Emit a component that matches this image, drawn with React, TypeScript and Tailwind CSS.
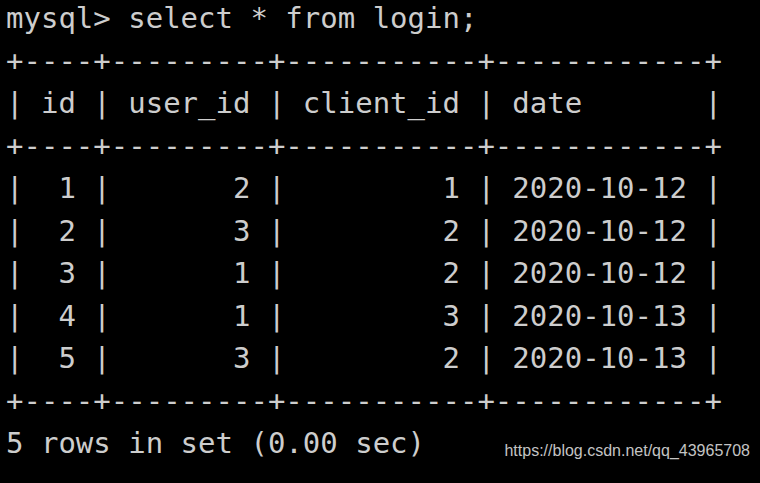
const lines = [
  'mysql> select * from login;',
  '+----+---------+-----------+------------+',
  '| id | user_id | client_id | date       |',
  '+----+---------+-----------+------------+',
  '|  1 |       2 |         1 | 2020-10-12 |',
  '|  2 |       3 |         2 | 2020-10-12 |',
  '|  3 |       1 |         2 | 2020-10-12 |',
  '|  4 |       1 |         3 | 2020-10-13 |',
  '|  5 |       3 |         2 | 2020-10-13 |',
  '+----+---------+-----------+------------+',
  '5 rows in set (0.00 sec)',
];

export default function App() {
  return (
    <div className="w-[760px] h-[483px] overflow-hidden bg-black text-[#cdcdcd]">
      <div className="-mt-[3px] pl-[6px] font-['DejaVu_Sans_Mono',monospace] text-[29px] leading-[42.5px]">
        {lines.map((line, i) => (
          <div key={i}>{line.replace(/ /g, '\u00a0')}</div>
        ))}
      </div>
      <div className="-mt-[26px] pr-[10px] text-right font-['Liberation_Sans',Arial,sans-serif] text-[16px] text-[#c4c4c4]">
        <span>https://blog.csdn.net/qq_43965708</span>
      </div>
    </div>
  );
}
